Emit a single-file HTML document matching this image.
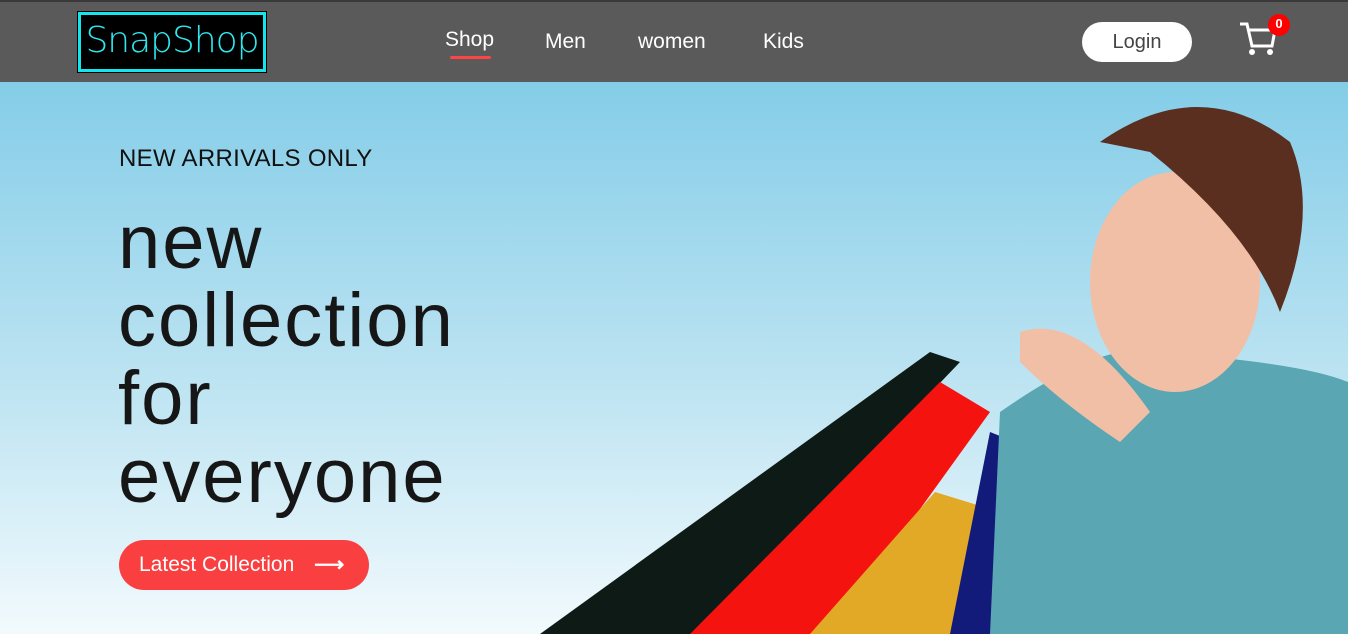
<!DOCTYPE html>
<html><head><style>
*{margin:0;padding:0;box-sizing:border-box}
body{width:1348px;height:634px;overflow:hidden;font-family:"Liberation Sans",sans-serif;background:#fff;position:relative}
.hdr{position:absolute;left:0;top:0;width:1348px;height:82px;background:#5a5a5a;border-top:2px solid #3a3a3a}
.logo{position:absolute;left:78px;top:12px;width:188px;height:60px;background:#000;border:3px solid #14e6ee;outline:1px solid #000;color:#2ee6ee;font-size:36px;line-height:52px;text-align:center;font-family:"DejaVu Sans",sans-serif;font-weight:200;letter-spacing:-1px}
.nav{position:absolute;top:30px;color:#fff;font-size:21px}
.hero{position:absolute;left:0;top:82px;width:1348px;height:552px;background:linear-gradient(#84cde8,#c3e6f3 60%,#f2fafd)}
.t1{position:absolute;left:119px;font-size:24px;color:#111;letter-spacing:0.3px}
.big{position:absolute;left:118px;font-size:76px;line-height:78px;color:#161616;letter-spacing:2px}
.btn{position:absolute;left:119px;top:540px;width:250px;height:50px;border-radius:25px;background:#fa3f40;color:#fff;font-size:21px;line-height:50px;padding-left:20px}
</style></head><body>
<div class="hdr"></div>
<div class="logo">SnapShop</div>
<div class="nav" style="left:445px;top:28px">Shop</div>
<div style="position:absolute;left:450px;top:56px;width:41px;height:3px;background:#f44;border-radius:2px"></div>
<div class="nav" style="left:545px">Men</div>
<div class="nav" style="left:638px">women</div>
<div class="nav" style="left:763px">Kids</div>
<div style="position:absolute;left:1082px;top:22px;width:110px;height:40px;border-radius:20px;background:#fff;color:#444;font-size:20px;text-align:center;line-height:40px">Login</div>
<svg style="position:absolute;left:1238px;top:20px" width="42" height="38" viewBox="0 0 42 38"><path d="M2 4h7l5 22h20l3-16H11" fill="none" stroke="#fff" stroke-width="3"/><circle cx="14" cy="32" r="3" fill="#fff"/><circle cx="32" cy="32" r="3" fill="#fff"/></svg>
<div style="position:absolute;left:1268px;top:14px;width:22px;height:22px;border-radius:50%;background:#f00;color:#fff;font-size:13px;font-weight:bold;text-align:center;line-height:20px">0</div>
<div class="hero">
<svg width="1348" height="552" style="position:absolute;left:0;top:0">
<polygon points="540,552 930,270 960,280 700,552" fill="#0d1a16"/>
<polygon points="690,552 940,300 990,330 830,552" fill="#f4130f"/>
<polygon points="810,552 935,410 1000,430 960,552" fill="#e2a926"/>
<polygon points="950,552 990,350 1015,360 1000,552" fill="#121a7a"/>
<path d="M1000 330 Q1100 260 1150 270 Q1300 280 1348 300 L1348 552 L990 552 Z" fill="#5aa6b3"/>
<ellipse cx="1175" cy="200" rx="85" ry="110" fill="#f1bfa6"/>
<path d="M1100 60 Q1200 -10 1290 60 Q1320 130 1280 230 Q1250 150 1150 70 Z" fill="#5b2f20"/>
<path d="M1020 250 Q1080 230 1150 330 L1120 360 Q1060 320 1020 280 Z" fill="#f1bfa6"/>
</svg>
<div class="t1" style="top:63px">NEW ARRIVALS ONLY</div>
<div class="big" style="top:122px">new<br>collection<br>for<br>everyone</div>
</div>
<div class="btn">Latest Collection <span style="margin-left:14px;font-weight:bold">⟶</span></div>
</body></html>
